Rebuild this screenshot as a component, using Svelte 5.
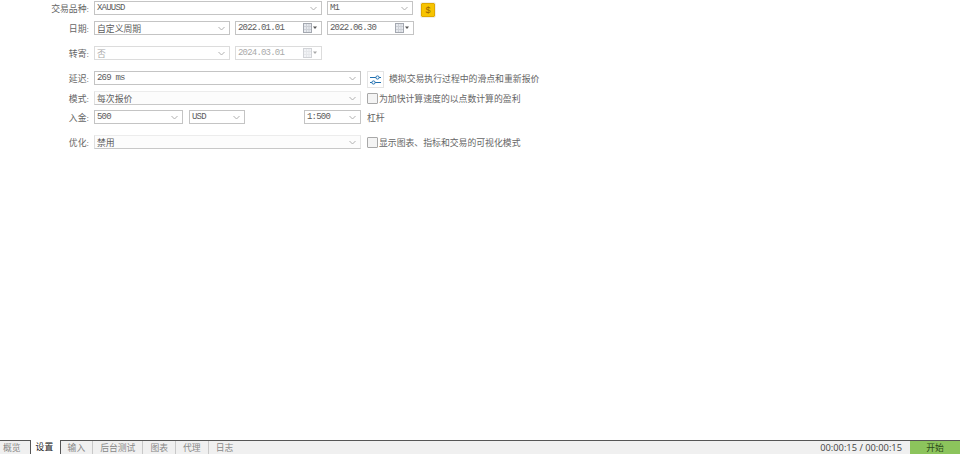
<script>
  const tabs = ['概览', '设置', '输入', '后台测试', '图表', '代理', '日志'];
  const active = '设置';
</script>

{#snippet combo(text, cls = '', latin = false)}
  <div class="field combo {cls}">
    <span class="val" class:latin>{text}</span>
    <svg class="chev" width="7" height="5" viewBox="0 0 7 5"><path d="M0.5 1l3 3 3-3" fill="none" stroke="#b0b0b0" /></svg>
  </div>
{/snippet}

{#snippet datebox(text)}
  <div class="field date">
    <span class="val latin">{text}</span>
    <svg class="cal" width="14" height="10" viewBox="0 0 14 10">
      <rect x="0.5" y="0.5" width="8" height="9" fill="#e6e9ee" stroke="#a4a8b0" />
      <path d="M1 3.5h7M1 6.5h7M3.5 1v8M6 1v8" stroke="#cdd0d6" />
      <path d="M10 3.5h4l-2 2.5z" fill="#555" />
    </svg>
  </div>
{/snippet}

<div class="page">
  <div class="form">
    <div class="row r1">
      <span class="lab">交易品种:</span>
      {@render combo('XAUUSD', 'w228', true)}
      {@render combo('M1', 'w86', true)}
      <div class="dollar"><span>$</span></div>
    </div>
    <div class="row r2">
      <span class="lab">日期:</span>
      {@render combo('自定义周期', 'w136')}
      {@render datebox('2022.01.01')}
      {@render datebox('2022.06.30')}
    </div>
    <div class="row r3 off">
      <span class="lab">转寄:</span>
      {@render combo('否', 'w136')}
      {@render datebox('2024.03.01')}
    </div>
    <div class="row r4">
      <span class="lab">延迟:</span>
      {@render combo('269 ms', 'w267', true)}
      <div class="swap">
        <svg width="13" height="12" viewBox="0 0 13 12">
          <path d="M1 3.5h11M1 8.5h11" stroke="#1f6fb0" />
          <circle cx="8.5" cy="3.5" r="1.6" fill="#fff" stroke="#1f6fb0" />
          <circle cx="4.5" cy="8.5" r="1.6" fill="#fff" stroke="#1f6fb0" />
        </svg>
      </div>
      <span class="note">模拟交易执行过程中的滑点和重新报价</span>
    </div>
    <div class="row r5">
      <span class="lab">模式:</span>
      {@render combo('每次报价', 'w267 soft')}
      <span class="box"></span>
      <span class="note tight">为加快计算速度的以点数计算的盈利</span>
    </div>
    <div class="row r6">
      <span class="lab">入金:</span>
      {@render combo('500', 'w89', true)}
      {@render combo('USD', 'w56', true)}
      {@render combo('1:500', 'w57', true)}
      <span class="note lever">杠杆</span>
    </div>
    <div class="row r7">
      <span class="lab">优化:</span>
      {@render combo('禁用', 'w267 soft')}
      <span class="box"></span>
      <span class="note tight">显示图表、指标和交易的可视化模式</span>
    </div>
  </div>

  <div class="bar">
    <div class="tabs">
      {#each tabs as tab}
        <span class="tab" class:active={tab === active}>{tab}</span>
      {/each}
    </div>
    <span class="time">00:00:15 / 00:00:15</span>
    <div class="start">开始</div>
  </div>
</div>

<style>
  :global(body) {
    margin: 0;
    background: #fff;
  }

  .page {
    width: 960px;
    height: 454px;
    display: flex;
    flex-direction: column;
    justify-content: space-between;
    overflow: hidden;
    font-family: "Liberation Serif", "Noto Sans CJK SC", serif;
    font-size: 8.85px;
    color: #5c5c5c;
  }

  .form {
    display: flex;
    flex-direction: column;
  }

  .row {
    display: flex;
    align-items: center;
    gap: 5px;
    height: 14px;
  }

  .r1 { margin-top: 1px; }
  .r2 { margin-top: 6px; }
  .r3 { margin-top: 11px; }
  .r4 { margin-top: 11px; }
  .r5 { margin-top: 6px; }
  .r6 { margin-top: 5px; }
  .r7 { margin-top: 11px; }

  .lab {
    width: 89px;
    text-align: right;
    color: #666;
    flex: none;
  }

  .field {
    box-sizing: border-box;
    height: 14px;
    border: 1px solid #c4c4c4;
    background: #fff;
    display: flex;
    align-items: center;
    justify-content: space-between;
    padding: 0 4px 0 2px;
    flex: none;
  }

  .field.soft {
    border-color: #ececec #e4e4e4 #c8c8c8 #e0e0e0;
    background: #fcfcfc;
  }

  .latin {
    font-family: "Liberation Mono", monospace;
    font-size: 9px;
    letter-spacing: -0.8px;
  }

  .w228 { width: 228px; }
  .w86 { width: 86px; }
  .w136 { width: 136px; }
  .w267 { width: 267px; }
  .w89 { width: 89px; margin-right: 1px; }
  .w56 { width: 56px; }
  .w57 { width: 57px; margin-left: 54px; }

  .date {
    width: 87px;
    padding-right: 4px;
  }

  .off .field {
    border-color: #dcdcdc;
    color: #aaa;
  }

  .off .cal {
    opacity: 0.5;
  }

  .dollar {
    box-sizing: border-box;
    width: 14px;
    height: 14px;
    margin: 3px 0 0 3px;
    background: #f7c400;
    border: 1px solid #e0a800;
    border-radius: 1px;
    outline: 1px solid #f0efe8;
    display: flex;
    align-items: center;
    justify-content: center;
    font-family: "Liberation Sans", sans-serif;
    font-size: 9px;
    color: #9c6400;
  }

  .swap {
    box-sizing: border-box;
    width: 17px;
    height: 17px;
    margin: 3px 0 0 1px;
    border: 1px solid #e4e4e4;
    display: flex;
    align-items: center;
    justify-content: center;
    flex: none;
  }

  .box {
    box-sizing: border-box;
    width: 11px;
    height: 11px;
    margin-left: 1px;
    border: 1px solid #a8a8a8;
    border-radius: 1px;
    background: #f4f4f4;
    flex: none;
  }

  .note {
    color: #666;
    white-space: nowrap;
  }

  .note.tight {
    margin-left: -4px;
  }

  .note.lever {
    margin-left: 1px;
  }

  .bar {
    box-sizing: border-box;
    height: 14px;
    border-top: 1px solid #555;
    background: #f0f0f0;
    display: flex;
    align-items: stretch;
    font-family: "Noto Sans CJK SC", sans-serif;
    font-size: 8.8px;
  }

  .tabs {
    display: flex;
    flex: 1;
  }

  .tab {
    padding: 0 7px;
    line-height: 13px;
    color: #888;
    border-right: 1px solid #c8c8c8;
  }

  .tab:first-child {
    padding: 0 3px;
    border-right: none;
  }

  .tab:last-child {
    border-right: none;
  }

  .tab.active {
    margin: -1px 0 0 6px;
    padding: 0 6px 0 5px;
    background: #fff;
    color: #222;
    border-left: 1px solid #555;
    border-right: 1px solid #555;
    line-height: 14px;
    width: 18px;
  }

  .time {
    font-family: "Open Sans", "Liberation Sans", sans-serif;
    font-size: 9.3px;
    color: #444;
    line-height: 13px;
    margin-right: 8px;
  }

  .start {
    width: 50px;
    background: #8cc45c;
    color: #2d4a1a;
    text-align: center;
    line-height: 13px;
  }
</style>
